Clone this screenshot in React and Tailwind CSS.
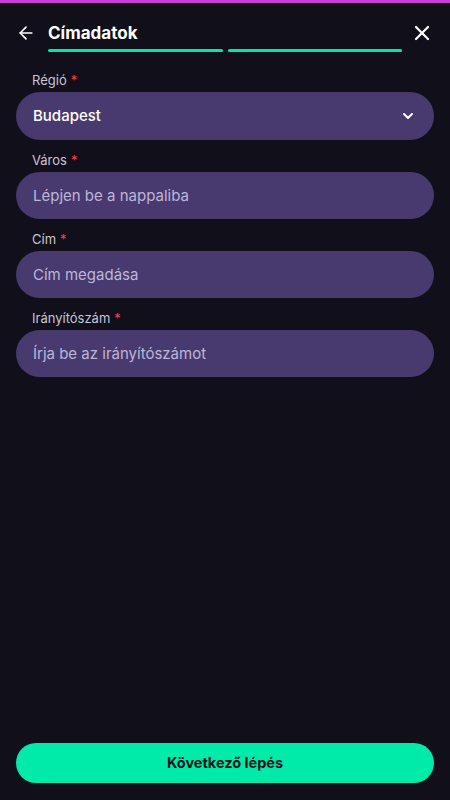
import { ArrowLeft, X, ChevronDown } from 'lucide-react'

const fields = [
  { label: 'Város', placeholder: 'Lépjen be a nappaliba' },
  { label: 'Cím', placeholder: 'Cím megadása' },
  { label: 'Irányítószám', placeholder: 'Írja be az irányítószámot' },
]

function Label({ children }) {
  return (
    <div className="text-[13px] leading-4 text-[#c9c6d8] mb-1 pl-4">
      {children}<span className="text-[#ff3d55] ml-1">*</span>
    </div>
  )
}

export default function App() {
  return (
    <div className="h-[800px] w-[450px] bg-[#100f1a] flex flex-col font-['Inter',sans-serif]">
      {/* Top accent */}
      <div className="h-[3px] bg-[#c83fd8]" />

      {/* Header */}
      <div className="flex items-start px-4 pt-[20px]">
        <button className="w-8 h-5 flex items-center text-white">
          <ArrowLeft size={20} strokeWidth={2} />
        </button>
        <div className="flex-1">
          <h1 className="text-white text-[17px] leading-5 font-bold">Címadatok</h1>
          <div className="flex gap-[5px] mt-[6px]">
            <div className="flex-1 h-[3px] rounded-full bg-[#00e8a8]" />
            <div className="flex-1 h-[3px] rounded-full bg-[#00e8a8]" />
          </div>
        </div>
        <button className="w-8 h-5 flex items-center justify-end text-white">
          <X size={24} strokeWidth={2.2} />
        </button>
      </div>

      {/* Form */}
      <div className="flex flex-col gap-3 px-4 pt-[20px]">
        <div>
          <Label>Régió</Label>
          <div className="h-[48px] rounded-full bg-[#483a6e] flex items-center justify-between pl-[17px] pr-[18px]">
            <span className="text-white text-[15px] font-medium">Budapest</span>
            <ChevronDown size={16} strokeWidth={3} className="text-white" />
          </div>
        </div>
        {fields.map(f => (
          <div key={f.label}>
            <Label>{f.label}</Label>
            <input
              placeholder={f.placeholder}
              className="w-full h-[47px] rounded-full bg-[#483a6e] pl-[17px] pr-4 text-[15px] text-white placeholder:text-[#bdb6d8] outline-none"
            />
          </div>
        ))}
      </div>

      <div className="flex-1" />

      {/* Footer */}
      <div className="px-4 pb-[17px]">
        <button className="w-full h-[40px] rounded-full bg-[#00eaa9] text-[#10121a] text-[14.5px] font-bold">
          Következő lépés
        </button>
      </div>
    </div>
  )
}
